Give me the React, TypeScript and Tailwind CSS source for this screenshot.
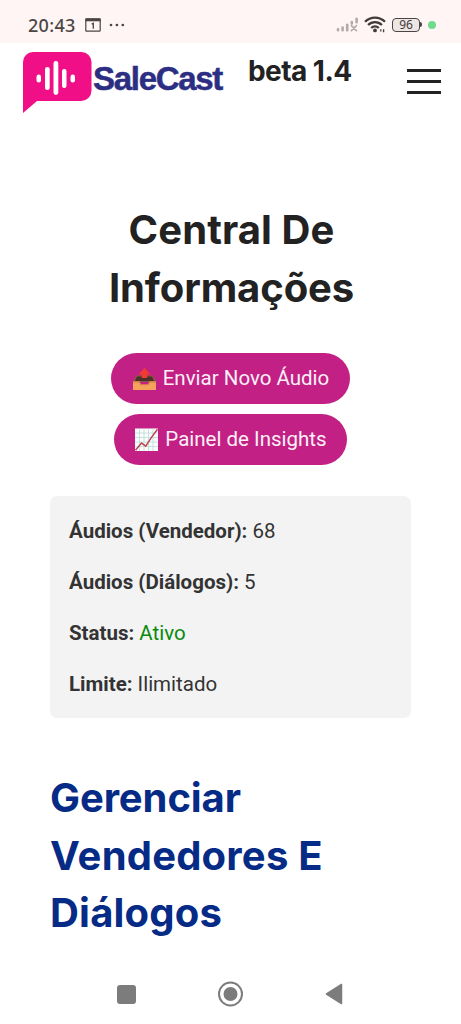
import type { ReactNode } from "react";

const StatusBar = () => {
  return (
    <div className="h-[43px] shrink-0 bg-[#fff5f4] flex flex-row items-center justify-between pl-7 pr-[25px] pt-[6px]">
      <div className="flex flex-row items-center text-[#4b4545]">
        <div className="w-[48px] text-[18px] leading-[20px] tracking-[0.3px] font-medium font-['Noto_Sans',sans-serif] whitespace-nowrap">
          20:43
        </div>
        <svg className="ml-[9px]" width="16" height="14" viewBox="0 0 16 14">
          <rect x="0.8" y="0.8" width="14.4" height="12.4" rx="0.8" fill="none" stroke="#4b4545" strokeWidth="1.2" />
          <path d="M0.5 0.5h15v2.8h-15z" fill="#4b4545" />
          <path d="M6.7 6.2l1.6-.8v5.4" fill="none" stroke="#4b4545" strokeWidth="1.3" />
        </svg>
        <svg className="ml-2" width="16" height="4" viewBox="0 0 16 4">
          <circle cx="2" cy="2" r="1.35" fill="#4b4545" />
          <circle cx="7.9" cy="2" r="1.35" fill="#4b4545" />
          <circle cx="13.8" cy="2" r="1.35" fill="#4b4545" />
        </svg>
      </div>
      <div className="flex flex-row items-center">
        <svg width="23" height="15" viewBox="0 0 23 15" fill="none" stroke="#b3a9a9" strokeWidth="2.6" strokeLinecap="round">
          <path d="M2 13.2v-.8M6.6 13.2v-2.6M11.2 13.2V7.8M15.8 6.600V5M20.6 5.2V1.8" />
          <path d="M15.4 8.6l5 5M20.4 8.6l-5 5" strokeWidth="1.6" />
        </svg>
        <svg className="ml-[5px]" width="22" height="17" viewBox="0 0 22 17" fill="none" stroke="#403b3b" strokeWidth="2.3">
          <path d="M1 5.8C6.5.2 15.5.2 21 5.8" />
          <path d="M4.1 9C8 5.1 14 5.1 17.9 9" />
          <path d="M7.2 12c2.200-2.100 5.400-2.100 7.600 0" />
          <circle cx="11" cy="14.4" r="1.9" fill="#403b3b" stroke="none" />
          <path d="M16.8 13.2v2.2M19.6 13.2v3" strokeWidth="1.3" />
        </svg>
        <div className="ml-[6px] flex flex-row items-center">
          <div className="w-[28px] h-[14px] rounded-[4px] border-[1.5px] border-[#4b4545] bg-[#eee5e5] flex items-center justify-center text-[12px] leading-none text-[#3f3a3a] font-['Noto_Sans',sans-serif]">
            96
          </div>
          <div className="w-[2px] h-[5px] rounded-r-sm bg-[#4b4545]" />
        </div>
        <div className="ml-[6px] size-[8px] rounded-full bg-[#6fdb8b]" />
      </div>
    </div>
  );
};

const Logo = () => {
  return (
    <div className="flex flex-row items-start">
      <svg width="69" height="62" viewBox="0 0 69 62">
        <path d="M10 0h48.500a10 10 0 0 1 10 10v28.500a10.500 10.500 0 0 1-10.500 10.500H14L0 61V10A10 10 0 0 1 10 0z" fill="#f00f87" />
        <g fill="#fff">
          <rect x="13.5" y="22.5" width="4.5" height="8" rx="2.2" />
          <rect x="22" y="15" width="4.7" height="23" rx="2.3" />
          <rect x="30.5" y="9" width="4.8" height="34" rx="2.4" />
          <rect x="39" y="17" width="4.5" height="19" rx="2.2" />
          <rect x="47.5" y="22.5" width="4.5" height="8" rx="2.2" />
        </g>
      </svg>
      <div className="mt-[9px] ml-[1px] text-[33px] leading-[36px] tracking-[-1.3px] font-bold text-[#2b2e83] font-['Liberation_Sans',sans-serif] [-webkit-text-stroke:0.5px_#2b2e83]">
        SaleCast
      </div>
    </div>
  );
};

const Header = () => {
  return (
    <header className="h-[77px] shrink-0 flex flex-row items-start pl-[23px] pr-5 pt-[9px]">
      <div className="w-[225px]">
        <Logo />
      </div>
      <div className="flex-1 mt-[2px] text-[28px] leading-[34px] tracking-[-0.55px] font-bold text-[#222] font-[Inter,sans-serif] whitespace-nowrap">
        beta 1.4
      </div>
      <div className="mt-[17px] w-[34px] flex flex-col gap-2">
        <div className="h-[3px] bg-[#222]" />
        <div className="h-[3px] bg-[#222]" />
        <div className="h-[3px] bg-[#222]" />
      </div>
    </header>
  );
};

const OutboxIcon = () => (
  <svg width="25" height="24" viewBox="0 0 25 24">
    <path d="M4 8.500h17l3 6.500H1z" fill="#8a5a42" />
    <path d="M5 9.500h15l2 4.500H3z" fill="#4b3028" />
    <path d="M1 14.500h6.500l1.500 3h7l1.500-3H24V23H1z" fill="#f5a35c" />
    <path d="M1 14.500h6.500l1.500 3h7l1.500-3H24v1h-5.800l-1.500 2.800H8.300L6.800 15.500H1z" fill="#d98445" />
    <path d="M12.500.800l6 6.700h-3.300V11H9.800V7.500H6.500z" fill="#ef3b32" />
  </svg>
);

const ChartIcon = () => (
  <svg width="25" height="24" viewBox="0 0 25 24">
    <rect x="1" y="0.5" width="23" height="22.5" fill="#fbfbfb" />
    <path d="M5.500.500V23M10 .500V23M14.500.500V23M19 .500V23M1 5h23M1 9.500h23M1 14h23M1 18.500h23" stroke="#b9ddd9" strokeWidth="0.8" />
    <path d="M1.500 22.300l6-7.200 4.200 3 6.300-9.500 5.500-7.300" fill="none" stroke="#bd4550" strokeWidth="1.5" />
  </svg>
);

type ButtonProps = { icon: ReactNode; label: string; className: string };

const PillButton = ({ icon, label, className }: ButtonProps) => {
  return (
    <button
      className={`h-[51px] rounded-full bg-[#c22084] flex flex-row items-center justify-center gap-[6px] text-[20.5px] text-[#fdf0f8] font-[Roboto,sans-serif] whitespace-nowrap ${className}`}
    >
      {icon}
      <span>{label}</span>
    </button>
  );
};

const InfoRow = ({ label, children }: { label: string; children: ReactNode }) => (
  <p className="leading-[31px]">
    <strong className="font-bold">{label}</strong> {children}
  </p>
);

const NavBar = () => {
  return (
    <nav className="h-[60px] shrink-0 flex flex-row items-center pl-[117px] text-[#7c7c7c]">
      <div className="size-[19px] rounded-[3px] bg-[#7c7c7c]" />
      <svg className="ml-[82px]" width="26" height="26" viewBox="0 0 26 26">
        <circle cx="12.5" cy="13" r="11.5" fill="none" stroke="currentColor" strokeWidth="2" />
        <circle cx="12.5" cy="13" r="7" fill="currentColor" />
      </svg>
      <svg className="ml-[81px]" width="18" height="22" viewBox="0 0 18 22">
        <path d="M16.500 1.500v19L1.500 11z" fill="currentColor" stroke="currentColor" strokeWidth="1.5" strokeLinejoin="round" />
      </svg>
    </nav>
  );
};

const App = () => {
  return (
    <div className="w-[461px] h-[1024px] overflow-hidden bg-white flex flex-col">
      <StatusBar />
      <Header />
      <main className="flex-1 flex flex-col px-[50px] pt-[81px]">
        <h1 className="text-center text-[40px] leading-[58px] font-bold text-[#222] font-[Inter,sans-serif] whitespace-nowrap">
          <span className="block pl-[2px] tracking-[0.1px]">Central De</span>
          <span className="block pl-[2px] tracking-[-0.1px]">Informações</span>
        </h1>
        <div className="mt-[36px] flex flex-col items-center gap-[10px]">
          <PillButton className="w-[239px]" icon={<OutboxIcon />} label="Enviar Novo Áudio" />
          <PillButton className="w-[233px]" icon={<ChartIcon />} label="Painel de Insights" />
        </div>
        <section className="mt-[31px] h-[222px] rounded-[7px] bg-[#f3f3f3] px-[19px] pt-5 flex flex-col gap-5 text-[20.5px] text-[#333] font-[Roboto,sans-serif]">
          <InfoRow label="Áudios (Vendedor):">68</InfoRow>
          <InfoRow label="Áudios (Diálogos):">5</InfoRow>
          <InfoRow label="Status:">
            <span className="text-[#098a0c]">Ativo</span>
          </InfoRow>
          <InfoRow label="Limite:">Ilimitado</InfoRow>
        </section>
        <h2 className="mt-[51px] text-[40px] leading-[57.5px] font-bold text-[#062b86] font-[Inter,sans-serif] whitespace-nowrap">
          <span className="block tracking-[-0.1px]">Gerenciar</span>
          <span className="block tracking-[0.2px]">Vendedores E</span>
          <span className="block tracking-[0.2px]">Diálogos</span>
        </h2>
      </main>
      <NavBar />
    </div>
  );
};

export default App;
